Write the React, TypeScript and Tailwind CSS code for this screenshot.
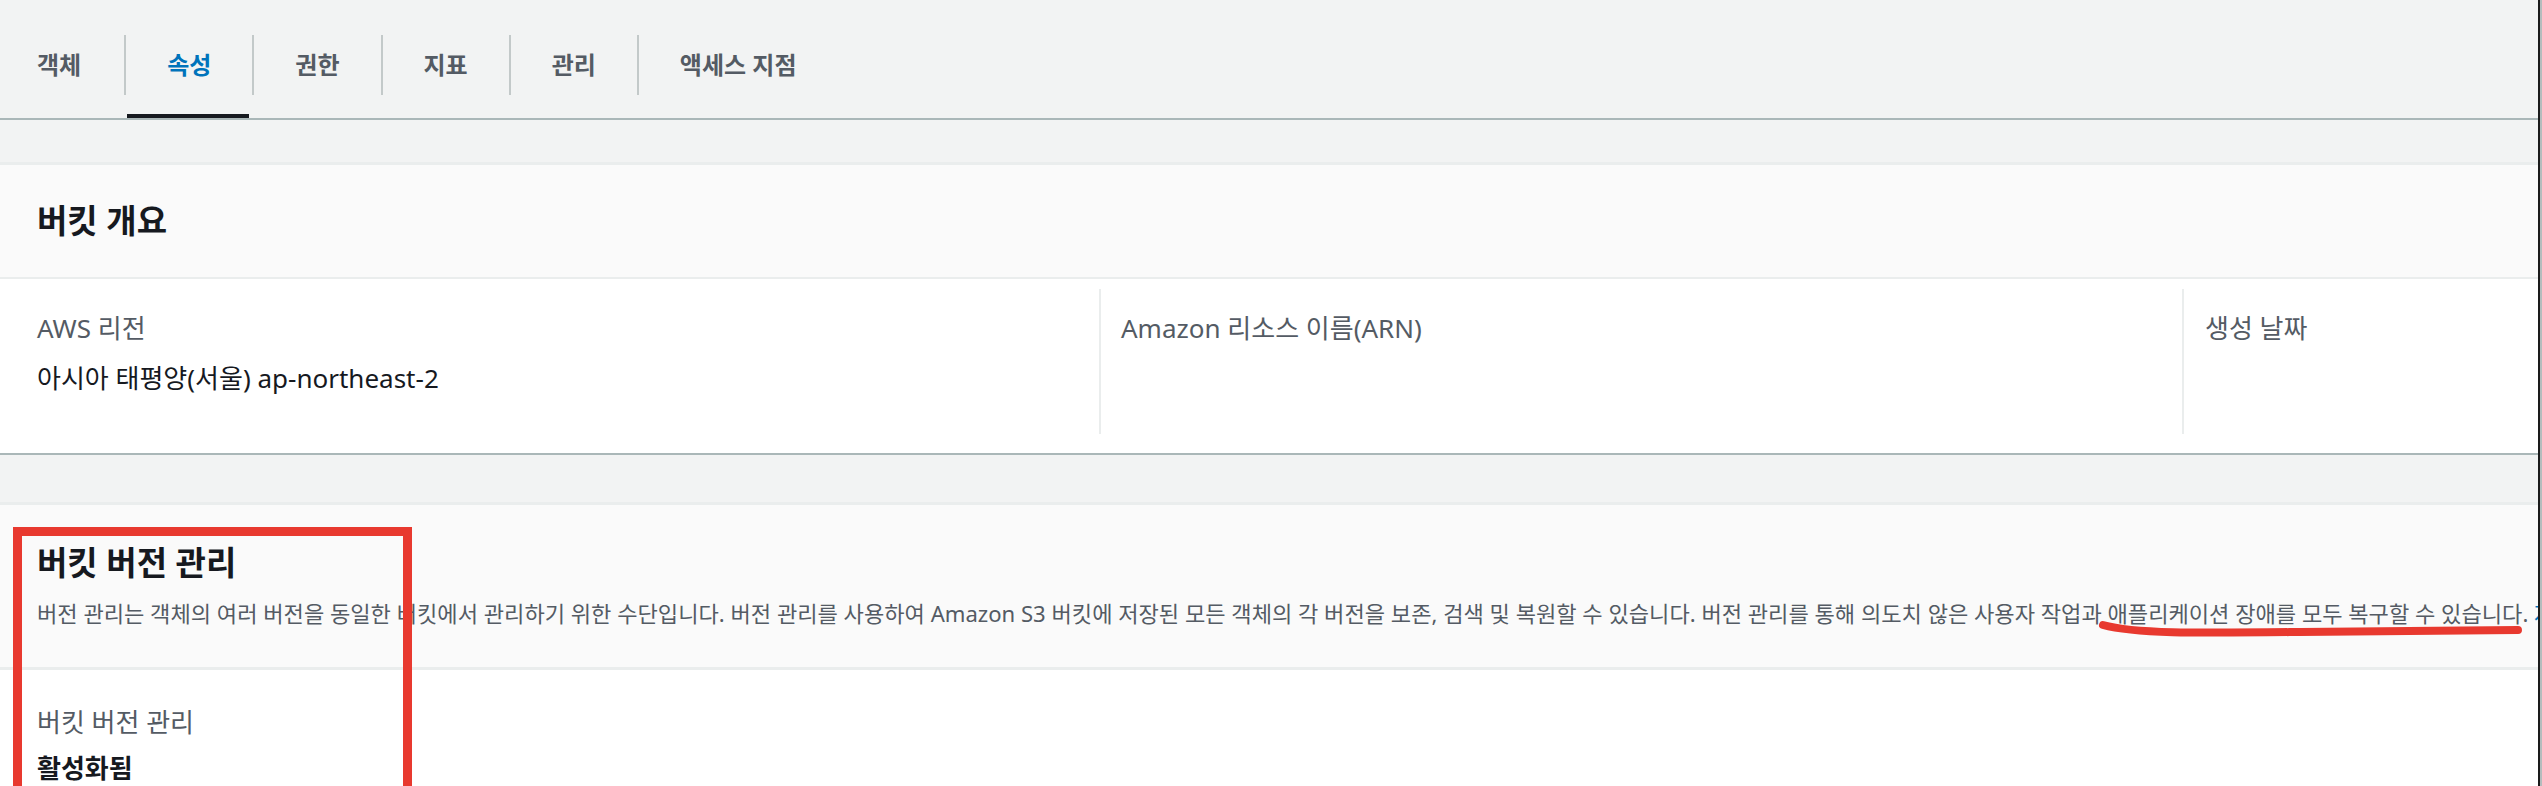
import React from "react";

const tabs = ["객체", "속성", "권한", "지표", "관리", "액세스 지점"];

const font = "font-['Noto_Sans','Noto_Sans_CJK_KR',sans-serif]";

const App: React.FC = () => {
  return (
    <div className={`flex w-[2542px] h-[786px] overflow-hidden bg-[#f2f3f3] ${font}`}>
      <div className="relative flex-1 min-w-0 overflow-hidden">
        {/* tabs */}
        <div className="flex h-[120px] border-b-2 border-[#aab7b8]">
          {tabs.map((t, i) => (
            <div key={t} className="flex flex-col pt-[35px]">
              <div
                className={`flex items-center h-[60px] text-[24px] font-bold ${
                  i === 0 ? "pl-[37px] pr-[43px]" : "px-[41px] border-l-2 border-[#c3c9c9]"
                } ${i === 1 ? "text-[#0073bb]" : "text-[#545b64]"}`}
              >
                {t}
              </div>
              <div className={`mt-auto h-[4px] mx-[3px] ${i === 1 ? "bg-[#16191f]" : ""}`} />
            </div>
          ))}
        </div>

        {/* bucket overview */}
        <div className="mt-[42px] bg-white border-t-[3px] border-[#eaeded] border-b-2 border-b-[#aab7b8]">
          <div className="bg-[#fafafa] border-b-2 border-[#eaeded] h-[114px] flex items-center px-[37px]">
            <h2 className="text-[33px] font-bold text-[#16191f] leading-[40px]">버킷 개요</h2>
          </div>
          <div className="flex pt-[10px] pb-[19px]">
            <div className="w-[1099px] h-[145px] pl-[37px] pt-[22px]">
              <div className="text-[26px] leading-[34px] text-[#545b64]">AWS 리전</div>
              <div className="mt-[16px] text-[26px] leading-[34px] text-[#16191f]">
                아시아 태평양(서울) ap-northeast-2
              </div>
            </div>
            <div className="w-[1083px] h-[145px] border-l-2 border-[#eaeded] pl-[20px] pt-[22px]">
              <div className="text-[26px] leading-[34px] text-[#545b64]">Amazon 리소스 이름(ARN)</div>
            </div>
            <div className="flex-1 h-[145px] border-l-2 border-[#eaeded] pl-[21px] pt-[22px]">
              <div className="text-[26px] leading-[34px] text-[#545b64]">생성 날짜</div>
            </div>
          </div>
        </div>

        {/* versioning */}
        <div className="mt-[47px] bg-white border-t-[3px] border-[#eaeded]">
          <div className="bg-[#fafafa] border-b-[3px] border-[#eaeded] px-[37px] pt-[38px] pb-[39px]">
            <h2 className="text-[33px] font-bold text-[#16191f] leading-[40px]">버킷 버전 관리</h2>
            <p className="mt-[15px] text-[22.1px] leading-[30px] text-[#545b64] whitespace-nowrap">
              버전 관리는 객체의 여러 버전을 동일한 버킷에서 관리하기 위한 수단입니다. 버전 관리를 사용하여 Amazon S3
              버킷에 저장된 모든 객체의 각 버전을 보존, 검색 및 복원할 수 있습니다. 버전 관리를 통해 의도치 않은 사용자
              작업과 애플리케이션 장애를 모두 복구할 수 있습니다.{" "}
              <span className="text-[#0073bb]">자세히 알아보기</span>
            </p>
          </div>
          <div className="px-[37px] pt-[35px] h-[200px]">
            <div className="text-[26px] leading-[34px] text-[#545b64]">버킷 버전 관리</div>
            <div className="mt-[12px] text-[26px] leading-[34px] font-bold text-[#16191f]">활성화됨</div>
          </div>
        </div>

        {/* annotations */}
        <div className="absolute left-[13px] top-[527px] w-[399px] h-[300px] border-[9px] border-[#e8392f] pointer-events-none" />
        <svg className="absolute left-0 top-0 pointer-events-none" width="2538" height="786">
          <path
            d="M2103 625 C2135 634 2200 633 2300 632 L2518 630"
            stroke="#e8392f"
            strokeWidth="8"
            strokeLinecap="round"
            fill="none"
          />
        </svg>
      </div>
      <div className="w-[2px] bg-[#1a1a1a]" />
      <div className="w-[2px] bg-[#b4bcbd]" />
    </div>
  );
};

export default App;
